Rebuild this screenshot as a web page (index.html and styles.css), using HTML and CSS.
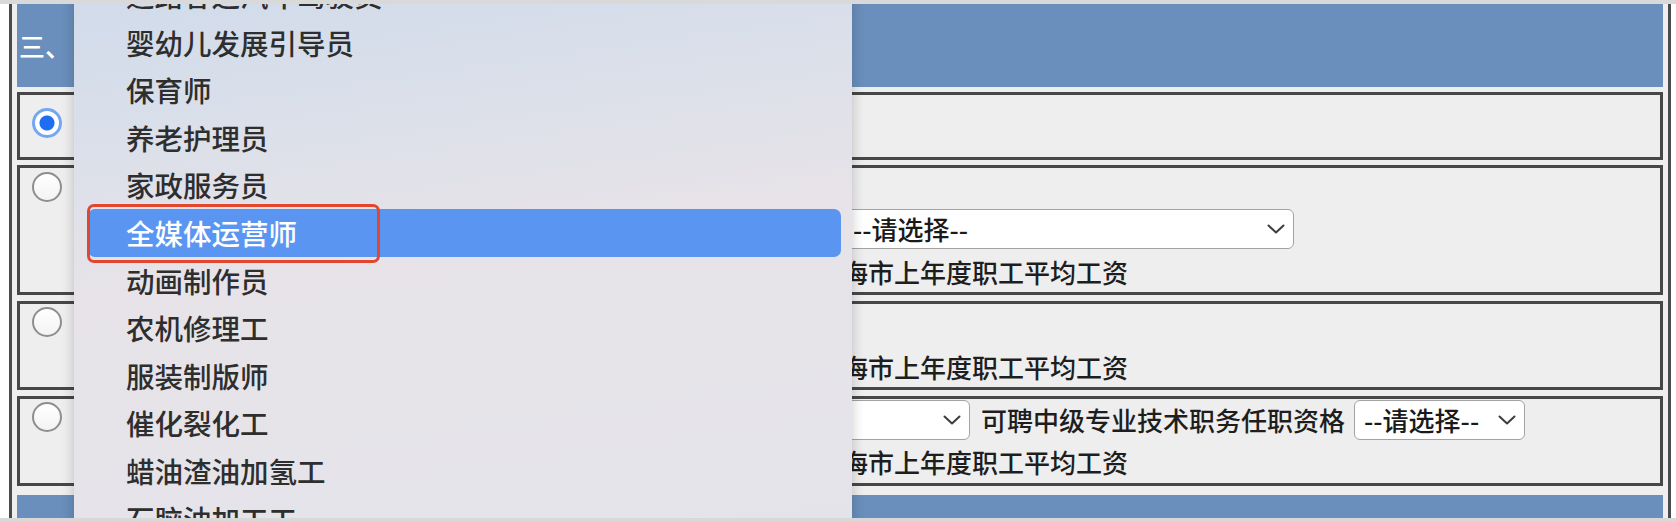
FILE: index.html
```html
<!DOCTYPE html>
<html lang="zh-CN">
<head>
<meta charset="utf-8">
<title>专业技术职称和技能等级</title>
<link rel="stylesheet" href="styles.css">
</head>
<body>
<div class="topbar"></div>
<div class="frame">
  <div class="section-head">三、 专业技术职称和技能等级</div>

  <div class="opt opt-1">
    <span class="radio checked"></span>
    <div class="opt-body">
      <div class="line h62">不具有专业技术职称和技能等级</div>
    </div>
  </div>

  <div class="opt opt-2">
    <span class="radio"></span>
    <div class="opt-body">
      <div class="line h37">取得本市紧缺急需工种的国家职业资格证书</div>
      <div class="line h47">取得国家职业资格证书或职业技能等级证书的职业（工种）名称：<span class="select sel-wide"><span class="sel-text">--请选择--</span><svg class="chev" viewBox="0 0 18 10" width="18" height="10"><path d="M1.5 1.5 L9 8.5 L16.5 1.5"/></svg></span></div>
      <div class="line h40">同时近四年内累计三十六个月在本市缴纳社会保险费基数不低于上海市上年度职工平均工资</div>
    </div>
  </div>

  <div class="opt opt-3">
    <span class="radio"></span>
    <div class="opt-body">
      <div class="line h34">具有国家职业资格证书（技能类）</div>
      <div class="line h34 gap12">同时近四年内累计三十六个月在本市缴纳社会保险费基数不低于上海市上年度职工平均工资</div>
    </div>
  </div>

  <div class="opt opt-4">
    <span class="radio"></span>
    <div class="opt-body">
      <div class="line h42">与所从事工作相对应的专业技术职称，所属系列：<span class="select sel-series"><span class="sel-text">--请选择--</span><svg class="chev" viewBox="0 0 18 10" width="18" height="10"><path d="M1.5 1.5 L9 8.5 L16.5 1.5"/></svg></span><span class="after-sel">可聘中级专业技术职务任职资格</span><span class="select sel-small"><span class="sel-text">--请选择--</span><svg class="chev" viewBox="0 0 18 10" width="18" height="10"><path d="M1.5 1.5 L9 8.5 L16.5 1.5"/></svg></span></div>
      <div class="line h42">同时近四年内累计三十六个月在本市缴纳社会保险费基数不低于上海市上年度职工平均工资</div>
    </div>
  </div>

  <div class="section-head next">四、 其他</div>
</div>

<div class="menu">
  <div class="menu-item">道路客运汽车驾驶员</div>
  <div class="menu-item">婴幼儿发展引导员</div>
  <div class="menu-item">保育师</div>
  <div class="menu-item">养老护理员</div>
  <div class="menu-item">家政服务员</div>
  <div class="menu-item active">全媒体运营师<span class="annot"></span></div>
  <div class="menu-item">动画制作员</div>
  <div class="menu-item">农机修理工</div>
  <div class="menu-item">服装制版师</div>
  <div class="menu-item">催化裂化工</div>
  <div class="menu-item">蜡油渣油加氢工</div>
  <div class="menu-item">石脑油加工工</div>
</div>
<div class="bottombar"></div>
</body>
</html>
```

FILE: styles.css
```css
html, body {
  margin: 0;
  padding: 0;
}
body {
  width: 1676px;
  height: 522px;
  overflow: hidden;
  position: relative;
  background: #ffffff;
  font-family: "Noto Sans CJK SC", "Noto Sans", sans-serif;
  font-size: 26px;
  font-weight: 500;
  color: #1e1e1e;
}

.topbar {
  position: relative;
  z-index: 20;
  height: 4px;
  background: #d9d9d9;
}
.bottombar {
  position: fixed;
  left: 0;
  bottom: 0;
  width: 100%;
  height: 4px;
  background: #d8d8d8;
  z-index: 20;
}

.frame {
  margin-left: 9px;
  width: 1662px;
  box-sizing: border-box;
  border-left: 3px solid #4a4a4a;
  border-right: 3px solid #4a4a4a;
  background: #eeeeee;
  padding: 0 5px 20px 5px;
  display: flex;
  flex-direction: column;
  gap: 5px;
}

.section-head {
  height: 83px;
  background: #6a8fbc;
  color: #ffffff;
  display: flex;
  align-items: center;
  padding-left: 2px;
  white-space: nowrap;
}
.section-head.next {
  margin-top: 4px;
}

.opt {
  display: flex;
  align-items: flex-start;
  border: 3px solid #474747;
  background: #eeeeee;
}
.opt-3, .opt-4 {
  margin-top: 1px;
}
.opt-body {
  display: flex;
  flex-direction: column;
}
.opt-3 .opt-body {
  padding-bottom: 3px;
}

.radio {
  flex: none;
  width: 30px;
  height: 30px;
  box-sizing: border-box;
  border-radius: 50%;
  border: 2px solid #8e8e8e;
  background: linear-gradient(180deg, #ffffff 0%, #f3f3f3 100%);
  margin-left: 12px;
  margin-right: 26px;
  margin-top: 3px;
}
.radio.checked {
  border: 3px solid #74a6f3;
  background: radial-gradient(circle at center, #1e6df2 0, #1e6df2 7px, #ffffff 8px);
}
.opt-1 .radio { margin-top: 13px; }
.opt-2 .radio { margin-top: 4px; }

.line {
  display: flex;
  align-items: center;
  white-space: nowrap;
  line-height: 30px;
}
.h62 { height: 62px; }
.h47 { height: 47px; }
.h42 { height: 42px; }
.h40 { height: 40px; }
.h37 { height: 37px; }
.h34 { height: 34px; }
.gap12 { margin-top: 12px; }

.select {
  display: inline-flex;
  align-items: center;
  box-sizing: border-box;
  height: 40px;
  background: #ffffff;
  border: 1.5px solid #a3a3a3;
  border-radius: 6px;
  padding: 0 8px 0 9px;
  color: #1a1a1a;
}
.sel-text {
  line-height: 30px;
}
.chev {
  margin-left: auto;
  flex: none;
}
.chev path {
  fill: none;
  stroke: #3c3c3c;
  stroke-width: 2;
  stroke-linecap: round;
  stroke-linejoin: round;
}
.sel-wide {
  margin-left: 1px;
  width: 451px;
}
.sel-series {
  margin-left: 6px;
  width: 304px;
}
.sel-small {
  margin-left: 9px;
  width: 171px;
}
.after-sel {
  margin-left: 11px;
}

.menu {
  position: absolute;
  z-index: 10;
  left: 74px;
  top: -29px;
  width: 778px;
  height: 580px;
  background: linear-gradient(172deg, #cfdaea 0%, #d9dfea 22%, #e7e3e8 48%, #e6e4e9 72%, #e2e3ea 100%);
  box-shadow: 0 0 12px rgba(0, 0, 0, 0.22);
  display: flex;
  flex-direction: column;
}
.menu-item {
  position: relative;
  flex: none;
  height: 47.6px;
  line-height: 47.6px;
  margin: 0 11px 0 14px;
  padding-left: 38px;
  border-radius: 7px;
  font-size: 28.5px;
  color: #2e2e2e;
  white-space: nowrap;
}
.menu-item.active {
  background: #5a96f1;
  color: #ffffff;
}
.annot {
  position: absolute;
  left: -1px;
  top: -5px;
  width: 293px;
  height: 59px;
  box-sizing: border-box;
  border: 3px solid #e3462e;
  border-radius: 7px;
}
```
